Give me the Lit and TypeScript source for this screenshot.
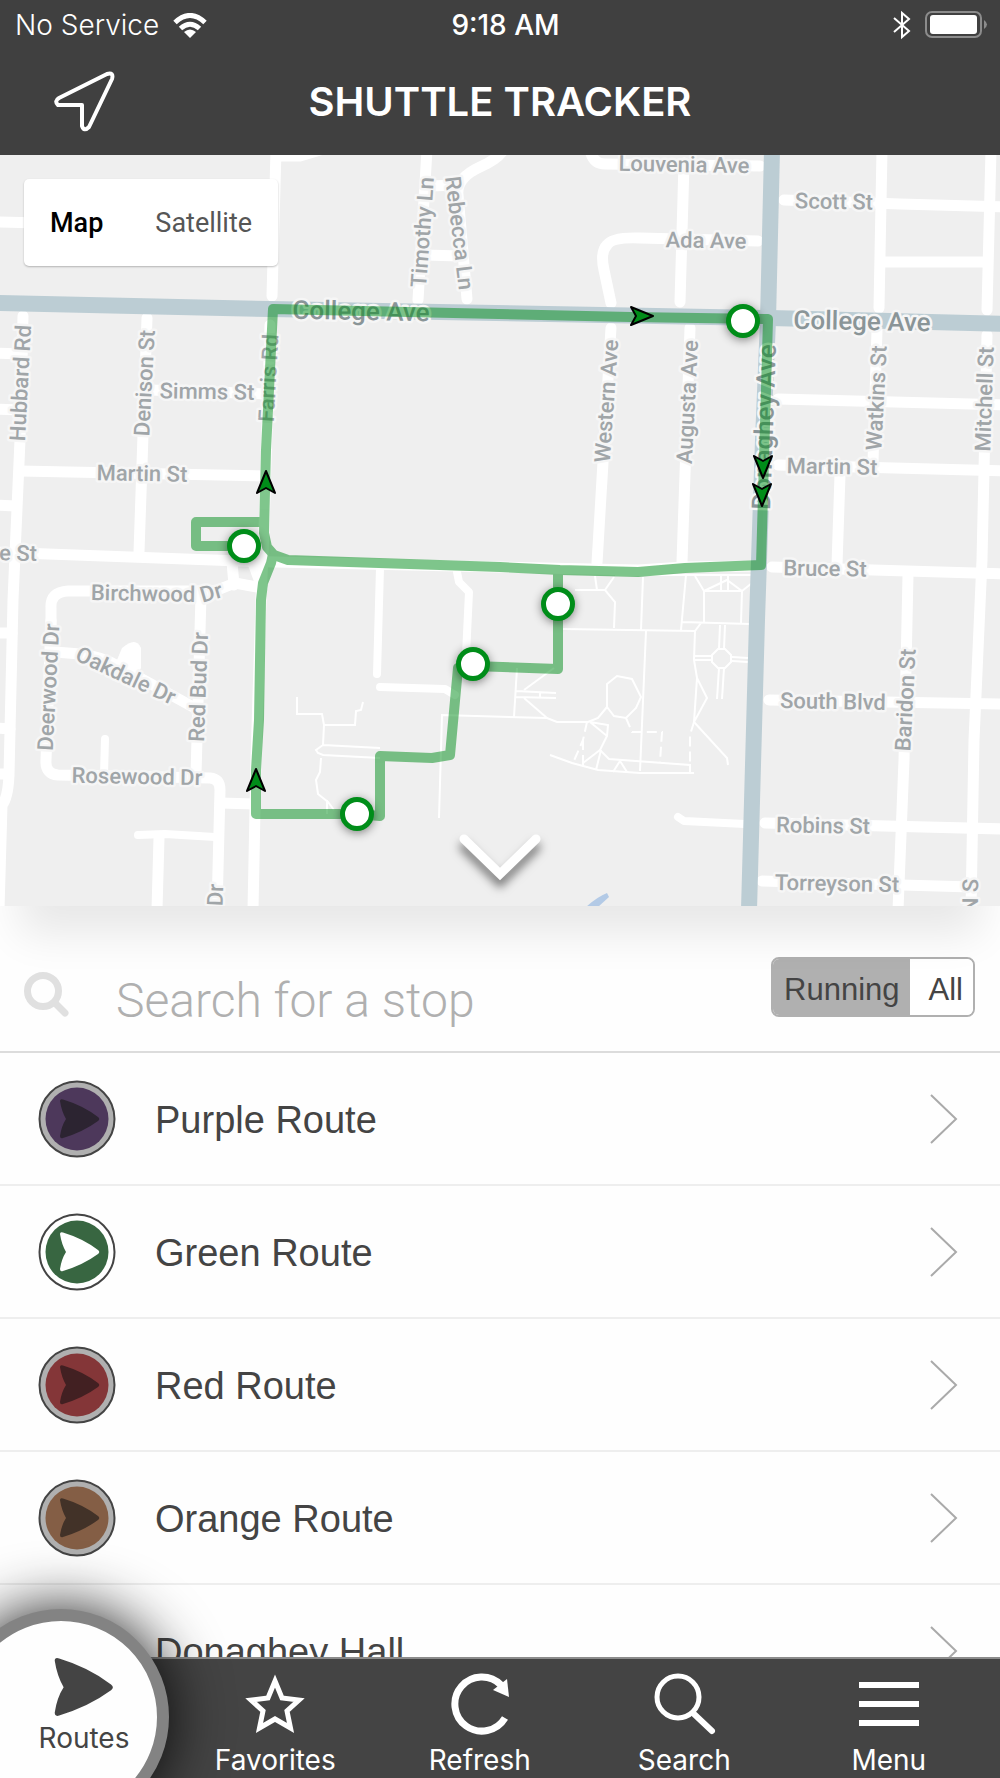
import { LitElement, html, svg, css } from "lit";
import { customElement, state } from "lit/decorators.js";
import { classMap } from "lit/directives/class-map.js";

type Label = [text: string, x: number, y: number, angle: number, kind?: "major" | "end"];
type Route = { name: string; tone?: string };

const ARROW =
  "M22 21Q22 18.500 25 19.500Q45 25.500 60 37Q62.500 39 60 41Q45 52 25 58Q22 59 22 56Q23.500 46 28 39Q23.500 31 22 21Z";

const HIGHWAYS = [
  "M-5 303L270 309L770 318L1005 324",
  "M772 150L768 320L763 440L757 620L749 910",
];

const STREETS = [
  "M23 316L20 440L13 600L9 775Q8 798 2 805L-1 910",
  "M147 318L139 552",
  "M20 471L265 476",
  "M150 390L268 394",
  "M-5 552L240 561L275 562L500 567L638 570L685 567L755 566",
  "M-5 353L22 354",
  "M-5 409L20 410",
  "M-5 505L15 506",
  "M-5 222L40 223",
  "M-5 633L12 633",
  "M-5 728L10 729",
  "M-5 774L8 774",
  "M276 150L272 296M270 325L264 530L261 600L256 760L253 910",
  "M280 156L300 156L320 150",
  "M427 150L418 300",
  "M502 152Q496 160 480 167Q456 178 458 195L467 299",
  "M430 186L458 185M425 255L460 256",
  "M590 150Q593 164 605 164L760 166",
  "M684 163L680 302",
  "M758 241L640 238Q612 237 607 245Q600 252 604 270L611 303",
  "M611 328L597 563",
  "M690 328L682 562",
  "M784 200L900 204L1005 207",
  "M882 150L879 308M877 330L873 462",
  "M991 150L987 310M987 335L982 560L974 740L971 910",
  "M885 262L985 262",
  "M778 399L1005 405",
  "M778 465L1005 471",
  "M772 567L1005 574",
  "M840 475L837 565",
  "M908 575L904 760L898 910",
  "M769 700L1005 704",
  "M765 823L1005 829",
  "M762 881L972 887",
  "M51 630L51 608Q50 592 68 591L215 591L235 583L262 588",
  "M232 562L234 585M252 560L260 582",
  "M51 620L46 760Q45 774 58 775L210 778Q220 779 220 790L217 910",
  "M201 595L196 775",
  "M55 652L80 654Q100 656 120 667L195 708",
  "M220 803L255 804",
  "M159 838L157 910",
];

const LANES = [
  "M105 739L104 775",
  "M138 835L165 834L215 837",
  "M380 568L377 674",
  "M380 687L445 689L455 695",
  "M457 572L459 582L469 592L466 655",
  "M678 817L684 821L745 824",
];

const FOOTPATHS = [
  "M297 697V714H322L324 725H355L356 711L361 710L363 702",
  "M324 725L323 745L316 750L318 753L323 755L380 758M323 745L380 748",
  "M321 758L320 772L316 780L318 794L328 802L334 810M327 800V814",
  "M439 818L442 715L547 718L557 722L588 722L598 718L607 707",
  "M595 576L597 590M575 590H605L615 602L614 628M605 590L614 577",
  "M643 577L641 630M686 575L681 630M563 629L695 631L701 623M682 622L750 624",
  "M695 576L704 591V622M704 591H742L741 623M704 591L727 580L742 591L752 583",
  "M721 576V590M728 576V590M615 575H752M646 631L640 771",
  "M695 631L694 660L697 678L707 698L694 722L727 758L728 765M697 678L694 722",
  "M695 656H712M695 660H712M732 657L748 658M732 661L748 662",
  "M720 625L719 649M725 625L724 649M719 668L717 699M724 668L722 699",
  "M718 649H725L731 655V662L725 668H718L712 662V655Z",
  "M517 668L514 717M516 691L556 693M516 697L556 698M540 692V698",
  "M554 668L524 690M524 698L547 718",
  "M590 722L608 725L607 736L600 750L609 759L690 765V773M590 722L607 736",
  "M550 755L572 763L598 770L640 773H694",
  "M600 750L583 763M601 750L596 770M613 772L620 761L627 772",
  "M607 684L617 676L632 679L641 697L636 708L626 718L614 716L607 707Z",
];

const DASHED = [
  "M587 722L583 740L573 763M583 740V765",
  "M626 718L632 732H662L660 762",
  "M694 722L690 735V762",
];

const LABELS: Label[] = [
  ["Louvenia Ave", 684, 164, 1],
  ["Ada Ave", 706, 240, 1],
  ["Scott St", 834, 201, 1],
  ["Timothy Ln", 422, 232, -86],
  ["Rebecca Ln", 460, 233, 83],
  ["College Ave", 361, 312, 1, "major"],
  ["College Ave", 862, 322, 1, "major"],
  ["Hubbard Rd", 20, 383, -87],
  ["Denison St", 144, 383, -87],
  ["Farris Rd", 268, 378, -87],
  ["Simms St", 207, 391, 1],
  ["Martin St", 142, 473, 1],
  ["e St", 37, 553, 1, "end"],
  ["Birchwood", 143, 593, 1],
  ["Dr", 211, 592, -16],
  ["Deerwood Dr", 48, 687, -87],
  ["Oakdale Dr", 126, 675, 25],
  ["Red Bud Dr", 198, 687, -88],
  ["Rosewood Dr", 137, 776, 1],
  ["Dr", 215, 895, -88],
  ["Western Ave", 606, 401, -86],
  ["Augusta Ave", 687, 402, -87],
  ["Donaghey Ave", 765, 427, -88, "major"],
  ["Watkins St", 876, 398, -87],
  ["Mitchell St", 984, 399, -88],
  ["Martin St", 832, 466, 1],
  ["Bruce St", 825, 568, 1],
  ["South Blvd", 833, 701, 1],
  ["Baridon St", 905, 700, -87],
  ["Robins St", 823, 825, 1],
  ["Torreyson St", 837, 883, 1],
  ["N S", 970, 896, -89],
];

const ROUTE_LINES = [
  "M273 309L630 317L768 319L761 565L685 568L638 572L560 570L500 567L288 560L274 555L267 547L264 533L266 450Z",
  "M273 554L271 563L263 583L261 600L259 720L256 770V814H357L380 816V756L432 758L450 755L458 668L473 666L558 669V574",
  "M260 522H196V546H244",
];

const STOPS = [[244, 546], [743, 321], [558, 604], [473, 664], [357, 814]];
const SHUTTLES = [[266, 482, 0], [256, 780, 0], [642, 316, 90], [763, 467, 180], [762, 495, 180]];

@customElement("shuttle-map")
class ShuttleMap extends LitElement {
  @state() private mode = "Map";

  static styles = css`
    :host {
      display: block;
      position: relative;
      box-shadow: 0 48px 40px -20px rgba(0, 0, 0, 0.09);
    }
    .canvas {
      display: block;
      width: 100%;
      background: #efefef;
    }
    .highway { fill: none; stroke: #bccdd4; stroke-width: 16; }
    .street { fill: none; stroke: #fff; stroke-width: 11; stroke-linecap: round; stroke-linejoin: round; }
    .lane { fill: none; stroke: #fff; stroke-width: 8; stroke-linecap: round; stroke-linejoin: round; }
    .footpath { fill: none; stroke: #fff; stroke-width: 2; }
    .dashed { stroke-dasharray: 10 5; }
    .cul { fill: #fff; }
    .pond { fill: #b3cae6; }
    .label {
      font: 500 22px Roboto, "Liberation Sans", sans-serif;
      fill: #a0a5a8;
      stroke: #f6f6f6;
      stroke-width: 5;
      stroke-linejoin: round;
      paint-order: stroke;
      text-anchor: middle;
    }
    .label.end { text-anchor: end; }
    .label.major { font-size: 26px; fill: #8a9598; }
    .line { fill: none; stroke: #008d19; stroke-width: 10; stroke-linejoin: round; }
    .lines { opacity: 0.5; }
    .stop { fill: #fff; stroke: #008d19; stroke-width: 5; filter: drop-shadow(0 2px 5px rgba(0, 0, 0, 0.45)); }
    .shuttle { fill: #008d19; stroke: #000; stroke-width: 2; stroke-linejoin: round; }
    .types {
      position: absolute;
      top: 24px;
      left: 24px;
      display: flex;
      background: #fff;
      border-radius: 5px;
      box-shadow: 0 1px 2px rgba(0, 0, 0, 0.25);
    }
    .type {
      border: 0;
      background: none;
      padding: 0 26px;
      height: 87px;
      font: 400 27px Roboto, "Liberation Sans", sans-serif;
      color: #565656;
    }
    .type.active { font-weight: 500; color: #000; }
    .collapse {
      position: absolute;
      left: 50%;
      bottom: 15px;
      transform: translateX(-50%);
      border: 0;
      padding: 0;
      background: none;
    }
    .collapse svg { display: block; overflow: visible; filter: drop-shadow(0 8px 5px rgba(0, 0, 0, 0.5)); }
  `;

  render() {
    return html`
      <svg class="canvas" viewBox="0 155 1000 751" role="img" aria-label="Campus map">
        ${STREETS.map((d) => svg`<path class="street" d=${d} />`)}
        ${LANES.map((d) => svg`<path class="lane" d=${d} />`)}
        <path class="cul" d="M122 648Q136 636 141 648V668L132 684L112 672Z" />
        ${FOOTPATHS.map((d) => svg`<path class="footpath" d=${d} />`)}
        ${DASHED.map((d) => svg`<path class="footpath dashed" d=${d} />`)}
        <path class="pond" d="M586 907Q597 897 607 893L609 897L598 907Z" />
        ${HIGHWAYS.map((d) => svg`<path class="highway" d=${d} />`)}
        ${LABELS.map(
          ([text, x, y, angle, kind]) => svg`
            <text class="label ${kind ?? ""}" transform="translate(${x} ${y}) rotate(${angle})" y="8">${text}</text>`
        )}
        <g class="lines">${ROUTE_LINES.map((d) => svg`<path class="line" d=${d} />`)}</g>
        ${STOPS.map(([x, y]) => svg`<circle class="stop" cx=${x} cy=${y} r="14.500" />`)}
        ${SHUTTLES.map(
          ([x, y, turn]) => svg`
            <path class="shuttle" transform="translate(${x} ${y}) rotate(${turn})" d="M0 -11L9 11L0 6L-9 11Z" />`
        )}
      </svg>
      <div class="types">
        ${["Map", "Satellite"].map(
          (name) => html`
            <button
              class=${classMap({ type: true, active: this.mode === name })}
              @click=${() => (this.mode = name)}
            >${name}</button>`
        )}
      </div>
      <button class="collapse" aria-label="Collapse map">
        <svg width="80" height="60" viewBox="0 0 80 60" fill="none" stroke="#fff" stroke-width="9">
          <path d="M4 8L40 43L76 8" stroke-linecap="round" />
        </svg>
      </button>
    `;
  }
}

@customElement("route-badge")
class RouteBadge extends LitElement {
  static properties = { tone: {} };
  declare tone: string;

  static styles = css`
    :host { display: block; width: 78px; height: 78px; }
    .badge { display: block; }
    .rim { fill: #b0b0b0; stroke: #444; stroke-width: 2; }
    .green .rim { fill: #fff; }
    .purple .disc { fill: #4d385b; }
    .purple .arrow { fill: #2c2431; }
    .green .disc { fill: #386641; }
    .green .arrow { fill: #fff; }
    .red .disc { fill: #843638; }
    .red .arrow { fill: #422022; }
    .orange .disc { fill: #845e45; }
    .orange .arrow { fill: #423228; }
  `;

  render() {
    return html`
      <svg class="badge ${this.tone}" width="78" height="78" viewBox="0 0 78 78" aria-hidden="true">
        <circle class="rim" cx="39" cy="39" r="37.500" />
        <circle class="disc" cx="39" cy="39" r="31.500" />
        <path class="arrow" d=${ARROW} />
      </svg>
    `;
  }
}

const ROUTES: Route[] = [
  { name: "Purple Route", tone: "purple" },
  { name: "Green Route", tone: "green" },
  { name: "Red Route", tone: "red" },
  { name: "Orange Route", tone: "orange" },
  { name: "Donaghey Hall" },
];

const TABS = [
  {
    name: "Favorites",
    icon: svg`<path stroke-width="5" d="M32 9L39 26L56 28L44 39L47.500 56L32 47L16.500 56L20 39L8 28L25 26Z" />`,
  },
  {
    name: "Refresh",
    icon: svg`<path stroke-width="7" d="M53 13A27 27 0 1 0 57 46" /><path fill="#fff" stroke="none" d="M59 7L61 25L45 18Z" />`,
  },
  {
    name: "Search",
    icon: svg`<circle stroke-width="5" cx="26" cy="25" r="21" /><path stroke-width="6" stroke-linecap="round" d="M42 42L60 59" />`,
  },
  { name: "Menu", icon: svg`<path stroke-width="6" d="M2 13H62M2 32H62M2 51H62" />` },
];

@customElement("app-root")
class AppRoot extends LitElement {
  @state() private filter = "Running";

  static styles = css`
    :host {
      display: flex;
      flex-direction: column;
      height: 100vh;
      overflow: hidden;
      position: relative;
      background: #fefefe;
      color: #444;
      font-family: "Liberation Sans", Arial, sans-serif;
    }
    .header { background: #404040; color: #fff; }
    .status {
      display: grid;
      grid-template-columns: 1fr auto 1fr;
      align-items: center;
      height: 50px;
      padding: 0 12px 0 15px;
      font: 300 28px Inter, sans-serif;
    }
    .status-left, .status-right { display: flex; align-items: center; gap: 14px; }
    .status-right { justify-content: flex-end; }
    .clock { padding-left: 8px; font-weight: 500; }
    .titlebar {
      display: grid;
      grid-template-columns: 1fr auto 1fr;
      align-items: center;
      height: 103px;
      padding: 0 54px 2px;
    }
    .title { margin: 0; font: 600 40px Inter, sans-serif; }
    .locate { justify-self: start; border: 0; padding: 0; background: none; }
    .locate svg { display: block; }
    .search {
      display: flex;
      align-items: flex-start;
      padding: 51px 25px 8px 24px;
      border-bottom: 2px solid #dcdcdc;
    }
    .search-icon { margin-top: 15px; }
    .query {
      flex: 1;
      min-width: 0;
      height: 86px;
      margin: 0 24px 0 46px;
      border: 0;
      padding: 0;
      outline: 0;
      background: none;
      font: 300 48px Roboto, sans-serif;
      color: #444;
    }
    .query::placeholder { color: #b0b0b0; opacity: 1; }
    .filter {
      display: flex;
      overflow: hidden;
      border: 2px solid #b0b0b0;
      border-radius: 8px;
    }
    .choice {
      height: 56px;
      border: 0;
      padding: 5px 10px 0 11px;
      background: #fff;
      color: #444;
      font: 400 31px "Liberation Sans", Arial, sans-serif;
    }
    .choice:last-child { padding-left: 19px; }
    .choice.active { background: #b0b0b0; }
    .list {
      flex: 1;
      min-height: 0;
      margin: 0;
      padding: 0;
      overflow-y: auto;
      scrollbar-width: none;
      list-style: none;
    }
    .row {
      display: grid;
      grid-template-columns: 78px 1fr auto;
      align-items: center;
      gap: 38px;
      height: 131px;
      padding: 0 42px 0 38px;
      border-bottom: 2px solid #eee;
      color: #444;
      font-size: 38px;
      text-decoration: none;
    }
    .row-name { grid-column: 2; padding: 4px 0 0 1px; }
    .tabs {
      display: grid;
      grid-template-columns: repeat(4, 1fr);
      height: 119px;
      padding: 0 9px 0 173px;
      border-top: 2px solid #8c8c8c;
      background: #444;
    }
    .tab {
      display: flex;
      flex-direction: column;
      align-items: center;
      gap: 7px;
      border: 0;
      padding: 13px 0 0;
      background: none;
      color: #fff;
      font: 400 28px/34px Inter, sans-serif;
    }
    .tab-icon { display: block; fill: none; stroke: #fff; }
    .routes {
      position: absolute;
      left: -47px;
      bottom: -47px;
      display: flex;
      flex-direction: column;
      align-items: center;
      width: 216px;
      height: 216px;
      padding: 36px 0 0 46px;
      box-sizing: border-box;
      border: 12px solid #838383;
      border-radius: 50%;
      background: #fefefe;
      box-shadow: 0 0 60px rgba(0, 0, 0, 0.9);
      color: #444;
      font: 400 28px/34px Inter, sans-serif;
    }
    .routes svg { margin-bottom: 4px; fill: #444; }
  `;

  render() {
    return html`
      <header class="header">
        <div class="status">
          <div class="status-left">
            <span>No Service</span>
            <svg width="34" height="25" viewBox="0 0 34 25" fill="none" stroke="#fff" aria-hidden="true">
              <path stroke-width="5" d="M2 9.500Q17 -4.500 32 9.500" />
              <path stroke-width="5" d="M7.500 15.500Q17 7 26.500 15.500" />
              <path fill="#fff" stroke="none" d="M17 25L11 19Q17 14 23 19Z" />
            </svg>
          </div>
          <span class="clock">9:18 AM</span>
          <div class="status-right">
            <svg width="18" height="30" viewBox="0 0 18 30" fill="none" stroke="#fff" stroke-width="2" aria-hidden="true">
              <path d="M1 8L16 21L9 27V3L16 9L1 22" />
            </svg>
            <svg width="63" height="28" viewBox="0 0 63 28" aria-hidden="true">
              <rect x="1" y="1" width="55" height="25" rx="6" fill="none" stroke="#8c8c8c" stroke-width="2" />
              <rect x="5" y="4" width="47" height="19" rx="3" fill="#fff" />
              <path d="M59 9Q65 13.500 59 18Z" fill="#8c8c8c" />
            </svg>
          </div>
        </div>
        <div class="titlebar">
          <button class="locate" aria-label="My location">
            <svg width="61" height="61" viewBox="0 0 61 61" fill="none" stroke="#fff" stroke-width="4" stroke-linejoin="round">
              <path d="M53 3L5 27Q0 30 4 34H28V55Q30 61 35 56L58 8Q60 1 53 3Z" />
            </svg>
          </button>
          <h1 class="title">SHUTTLE TRACKER</h1>
        </div>
      </header>

      <shuttle-map></shuttle-map>

      <section class="search">
        <svg class="search-icon" width="46" height="46" viewBox="0 0 46 46" fill="none" stroke="#e0e0e0" stroke-width="7" aria-hidden="true">
          <circle cx="19" cy="19" r="15.500" />
          <path stroke-linecap="round" d="M31 31L41 41" />
        </svg>
        <input class="query" type="text" placeholder="Search for a stop" aria-label="Search for a stop" />
        <div class="filter">
          ${["Running", "All"].map(
            (name) => html`
              <button
                class=${classMap({ choice: true, active: this.filter === name })}
                @click=${() => (this.filter = name)}
              >${name}</button>`
          )}
        </div>
      </section>

      <ul class="list">
        ${ROUTES.map(
          ({ name, tone }) => html`
            <li>
              <a class="row" href="#">
                ${tone ? html`<route-badge .tone=${tone}></route-badge>` : null}
                <span class="row-name">${name}</span>
                <svg width="28" height="50" viewBox="0 0 28 50" fill="none" stroke="#aaa" stroke-width="2" aria-hidden="true">
                  <path d="M1 1L26 25L1 49" />
                </svg>
              </a>
            </li>`
        )}
      </ul>

      <nav class="tabs">
        ${TABS.map(
          ({ name, icon }) => html`
            <button class="tab">
              <svg class="tab-icon" width="64" height="64" viewBox="0 0 64 64" aria-hidden="true">${icon}</svg>
              ${name}
            </button>`
        )}
      </nav>
      <button class="routes">
        <svg width="60" height="60" viewBox="21.500 18.500 40.500 40.500" aria-hidden="true"><path d=${ARROW} /></svg>
        Routes
      </button>
    `;
  }
}
